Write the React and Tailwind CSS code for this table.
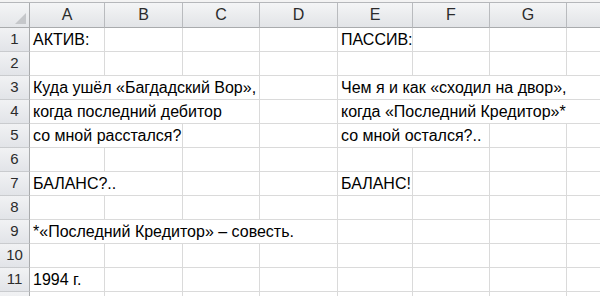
import React from 'react';

// column widths in px; H runs past the right edge, its letter is out of view
const cols = [
  { name: 'A', w: 75 },
  { name: 'B', w: 78 },
  { name: 'C', w: 77 },
  { name: 'D', w: 78 },
  { name: 'E', w: 75 },
  { name: 'F', w: 77 },
  { name: 'G', w: 77 },
  { name: '', w: 77 },
];

// each row: list of [startCol, span, text]
const rows = [
  [[0, 1, 'АКТИВ:'], [4, 1, 'ПАССИВ:']],
  [],
  [[0, 3, 'Куда ушёл «Багдадский Вор»,'], [4, 4, 'Чем я и как «сходил на двор»,']],
  [[0, 3, 'когда последний дебитор'], [4, 4, 'когда «Последний Кредитор»*']],
  [[0, 2, 'со мной расстался?'], [4, 2, 'со мной остался?..']],
  [],
  [[0, 2, 'БАЛАНС?..'], [4, 1, 'БАЛАНС!']],
  [],
  [[0, 4, '*«Последний Кредитор» – совесть.']],
  [],
  [[0, 1, '1994 г.']],
  [],
];

const buildCells = (items) => {
  const cells = [];
  let c = 0;
  while (c < cols.length) {
    const item = items.find((it) => it[0] === c);
    const span = item ? item[1] : 1;
    const width = cols.slice(c, c + span).reduce((s, col) => s + col.w, 0);
    cells.push({ key: c, width, text: item ? item[2] : '' });
    c += span;
  }
  return cells;
};

const Row = ({ n, items }) => (
  <div className="flex h-[24px] shrink-0">
    <div className="w-[30px] shrink-0 flex items-center justify-center bg-gradient-to-b from-[#f1f2f4] to-[#e2e4e8] border-r border-r-[#a9abad] border-b border-b-[#c9cbce] text-[15px] text-[#2b2b2b]">
      {n}
    </div>
    {buildCells(items).map((cell) => (
      <div
        key={cell.key}
        style={{ width: cell.width }}
        className="shrink-0 flex items-center pl-[3px] whitespace-nowrap overflow-hidden border-r border-b border-[#dadada] text-[16px] text-black"
      >
        {cell.text}
      </div>
    ))}
  </div>
);

export default function App() {
  return (
    <div className="w-[600px] h-[296px] overflow-hidden bg-white flex flex-col font-['Liberation_Sans',Arial,sans-serif]">
      {/* strip above the column headers */}
      <div className="h-[3px] shrink-0 bg-[#f3f3f3] border-b border-[#b5b7ba]" />

      {/* column headers */}
      <div className="flex h-[25px] shrink-0">
        <div className="w-[30px] shrink-0 relative bg-gradient-to-b from-[#f4f5f6] to-[#e4e6e9] border-r border-b border-[#a9abad]">
          <svg className="absolute right-[3px] bottom-[3px]" width="11" height="11" viewBox="0 0 11 11">
            <polygon points="11,0 11,11 0,11" fill="#c5c7ca" />
          </svg>
        </div>
        {cols.map((col, i) => (
          <div
            key={i}
            style={{ width: col.w }}
            className="shrink-0 flex items-center justify-center bg-gradient-to-b from-[#f4f5f6] to-[#e2e4e7] border-r border-r-[#b9bbbe] border-b border-b-[#a9abad] text-[16px] text-[#2b2b2b]"
          >
            {col.name}
          </div>
        ))}
      </div>

      {rows.map((items, i) => (
        <Row key={i} n={i < 11 ? i + 1 : ''} items={items} />
      ))}
    </div>
  );
}
